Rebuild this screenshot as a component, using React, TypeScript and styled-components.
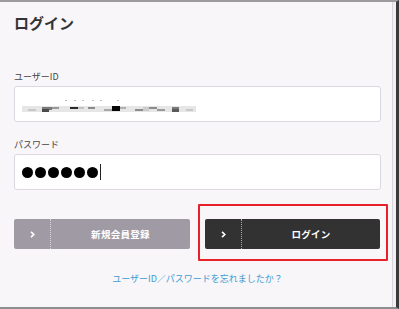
import styled, { createGlobalStyle } from "styled-components";

const GlobalStyle = createGlobalStyle`
  html, body {
    margin: 0;
    padding: 0;
    background: #f4f2f5;
  }
  * {
    box-sizing: border-box;
  }
`;

const mosaic = [
  { x: 0, y: 6, w: 174, h: 6, c: "#e6e6e6" },
  { x: 6, y: 9, w: 8, h: 2, c: "#c8c8c8" },
  { x: 20, y: 7, w: 10, h: 3, c: "#7a7a7a" },
  { x: 20, y: 9, w: 7, h: 3, c: "#4a4a4a" },
  { x: 30, y: 7, w: 7, h: 2, c: "#9a9a9a" },
  { x: 48, y: 7, w: 8, h: 2, c: "#2a2a2a" },
  { x: 56, y: 7, w: 6, h: 2, c: "#c4c4c4" },
  { x: 66, y: 7, w: 7, h: 2, c: "#8a8a8a" },
  { x: 82, y: 9, w: 8, h: 2, c: "#a8a8a8" },
  { x: 90, y: 6, w: 8, h: 5, c: "#050505" },
  { x: 98, y: 7, w: 6, h: 2, c: "#b0b0b0" },
  { x: 113, y: 9, w: 8, h: 2, c: "#8c8c8c" },
  { x: 121, y: 7, w: 6, h: 4, c: "#cccccc" },
  { x: 127, y: 7, w: 8, h: 2, c: "#8c8c8c" },
  { x: 135, y: 9, w: 8, h: 2, c: "#9a9a9a" },
  { x: 150, y: 7, w: 7, h: 2, c: "#7a7a7a" },
  { x: 150, y: 9, w: 7, h: 3, c: "#5a5a5a" },
  { x: 164, y: 9, w: 7, h: 2, c: "#c8c8c8" },
  { x: 43, y: 0, w: 2, h: 1, c: "#bdbdbd" },
  { x: 52, y: 0, w: 2, h: 1, c: "#bdbdbd" },
  { x: 60, y: 0, w: 2, h: 1, c: "#c6c6c6" },
  { x: 70, y: 0, w: 2, h: 1, c: "#c6c6c6" },
  { x: 78, y: 0, w: 2, h: 1, c: "#bdbdbd" },
  { x: 95, y: 0, w: 2, h: 1, c: "#c6c6c6" },
];

const Chevron = () => (
  <svg width="5" height="7" viewBox="0 0 5 7">
    <path d="M1 0.8 L3.8 3.5 L1 6.2" fill="none" stroke="#fff" strokeWidth="1.6" />
  </svg>
);

const App = () => (
  <>
    <GlobalStyle />
    <Frame>
      <Panel>
        <Title>ログイン</Title>
        <Label>ユーザーID</Label>
        <Input>
          <svg width="174" height="12" viewBox="0 0 174 12">
            {mosaic.map((m, i) => (
              <rect key={i} x={m.x} y={m.y} width={m.w} height={m.h} fill={m.c} />
            ))}
          </svg>
        </Input>
        <Label>パスワード</Label>
        <Input>
          {Array.from({ length: 6 }).map((_, i) => (
            <Dot key={i} />
          ))}
          <Caret />
        </Input>
        <Buttons>
          <Button $variant="sub">
            <IconCell>
              <Chevron />
            </IconCell>
            <ButtonText>新規会員登録</ButtonText>
          </Button>
          <Button $variant="main">
            <IconCell>
              <Chevron />
            </IconCell>
            <ButtonText>ログイン</ButtonText>
            <Highlight />
          </Button>
        </Buttons>
        <Forgot href="#">ユーザーID／パスワードを忘れましたか？</Forgot>
      </Panel>
    </Frame>
  </>
);

export default App;

const Frame = styled.div`
  width: 399px;
  height: 309px;
  border-top: 2px solid #9c9c9c;
  border-bottom: 2px solid #8e8e8e;
  border-right: 3px solid #3a3a3a;
  background: #f1eff2;
  font-family: "Noto Sans CJK JP", "Noto Sans", sans-serif;
  overflow: hidden;
`;

const Panel = styled.div`
  width: 393px;
  height: 100%;
  background: #f8f6f9;
  border-right: 1px solid #d9d5dc;
  padding: 10px 11px 0 14px;
  display: flex;
  flex-direction: column;
`;

const Title = styled.h1`
  margin: 0;
  font-size: 15px;
  line-height: 22px;
  font-weight: 700;
  color: #333;
`;

const Label = styled.div`
  margin-top: 36px;
  font-size: 9px;
  line-height: 14px;
  color: #444;

  & + div + & {
    margin-top: 16px;
  }
`;

const Input = styled.div`
  margin-top: 2px;
  height: 36px;
  background: #fff;
  border: 1px solid #dcd8e1;
  border-radius: 3px;
  padding: 0 7px;
  display: flex;
  align-items: center;
  gap: 2px;

  svg {
    margin-top: 3px;
  }
`;

const Dot = styled.span`
  width: 11px;
  height: 11px;
  border-radius: 50%;
  background: #000;
  margin-top: 1px;
`;

const Caret = styled.span`
  width: 1px;
  height: 16px;
  background: #222;
`;

const Buttons = styled.div`
  margin-top: 29px;
  display: flex;
  gap: 15px;
`;

const Button = styled.div<{ $variant: "main" | "sub" }>`
  position: relative;
  flex: ${(p) => (p.$variant === "main" ? "0 0 175px" : "0 0 176px")};
  height: 30px;
  border-radius: 2px;
  background: ${(p) => (p.$variant === "main" ? "#323232" : "#a09aa5")};
  display: flex;
  align-items: stretch;
  color: #fff;
`;

const IconCell = styled.div`
  width: 37px;
  display: flex;
  align-items: center;
  justify-content: center;
  border-right: 1px dotted rgba(255, 255, 255, 0.6);
`;

const ButtonText = styled.span`
  flex: 1;
  display: flex;
  align-items: center;
  justify-content: center;
  font-size: 9.5px;
  font-weight: 700;
  letter-spacing: 0.3px;
`;

const Highlight = styled.span`
  position: absolute;
  top: -15px;
  left: -7px;
  right: -8px;
  bottom: -12px;
  border: 2px solid #e8202a;
  border-radius: 1px;
  pointer-events: none;
`;

const Forgot = styled.a`
  margin-top: 23px;
  align-self: center;
  font-size: 9px;
  line-height: 14px;
  color: #3b9bd1;
  text-decoration: none;
`;
